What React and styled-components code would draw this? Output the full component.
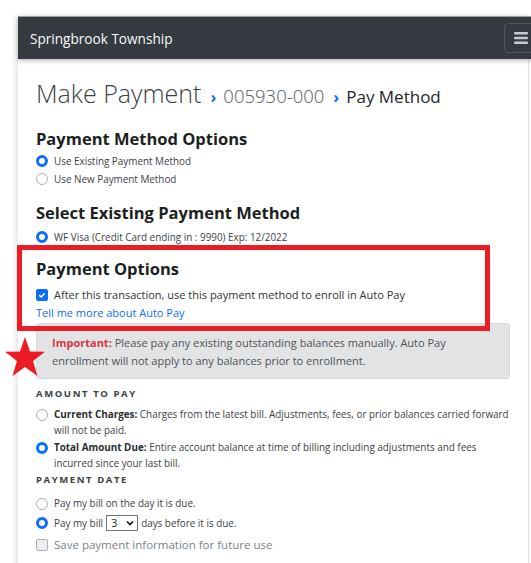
import React from 'react';
import styled, { createGlobalStyle } from 'styled-components';

const GlobalStyle = createGlobalStyle`
  html, body {
    margin: 0;
    padding: 0;
    background: #ffffff;
    font-family: 'Open Sans', 'Noto Sans', sans-serif;
    color: #212529;
  }
`;

const Page = styled.div`
  padding: 16px 0 0 18px;
  height: 547px;
  overflow: hidden;
`;

const Card = styled.div`
  width: 510px;
  min-height: 560px;
  background: #fff;
  border-right: 1px solid #e3e3e3;
  box-shadow: -2px 0 6px rgba(0, 0, 0, 0.12);
`;

const NavBar = styled.div`
  display: flex;
  align-items: center;
  justify-content: space-between;
  height: 42px;
  margin-right: -4px;
  padding-left: 12px;
  background: #343a40;
  border-top: 1px solid #9a9ea3;
  box-shadow: 0 2px 4px rgba(0, 0, 0, 0.25);
`;

const Brand = styled.span`
  color: #f8f9fa;
  font-size: 13.6px;
`;

const Toggler = styled.button`
  display: flex;
  align-items: center;
  justify-content: center;
  width: 34px;
  height: 30px;
  margin-right: -6px;
  padding: 0;
  background: transparent;
  border: 1px solid #50565c;
  border-radius: 4px;
`;

const Body = styled.div`
  padding: 18px 18px 0 18px;
`;

const Title = styled.h1`
  display: flex;
  align-items: baseline;
  margin: 0 0 15px;
  font-weight: 300;
  font-size: 25px;
  line-height: 32px;
  color: #3a3f44;
`;

const Crumb = styled.span`
  font-size: ${(p) => p.size || 18}px;
  font-weight: ${(p) => (p.dark ? 400 : 300)};
  color: ${(p) => (p.dark ? '#212529' : '#555b61')};
`;

const Chevron = styled.span`
  margin: 0 7px 0 9px;
  color: #0d6efd;
  font-size: 16px;
  font-weight: 700;
`;

const Heading = styled.h2`
  margin: ${(p) => p.top || 0}px 0 ${(p) => p.bottom || 2}px;
  font-size: 16.5px;
  line-height: 22px;
  font-weight: 700;
  color: #1c1f22;
`;

const OptionRow = styled.label`
  display: flex;
  align-items: ${(p) => (p.top ? 'flex-start' : 'center')};
  gap: 6px;
  min-height: 18px;
  font-size: ${(p) => p.size || 9.9}px;
  line-height: ${(p) => p.lh || 18}px;
  color: ${(p) => p.color || '#3d4247'};
`;

const Radio = styled.span`
  flex: none;
  box-sizing: border-box;
  width: 12px;
  height: 12px;
  margin-top: ${(p) => (p.offset ? '3px' : 0)};
  border-radius: 50%;
  background: #fff;
  border: ${(p) => (p.on ? '3.5px solid #0d6efd' : '1px solid #a9afb5')};
`;

const Check = styled.span`
  flex: none;
  display: flex;
  align-items: center;
  justify-content: center;
  box-sizing: border-box;
  width: 12px;
  height: 12px;
  border-radius: 2px;
  background: ${(p) => (p.on ? '#0d6efd' : '#eceef0')};
  border: 1px solid ${(p) => (p.on ? '#0d6efd' : '#a9afb5')};
`;

const OptionsSection = styled.div`
  position: relative;
`;

const Highlight = styled.div`
  position: absolute;
  left: -19px;
  top: -13px;
  width: 463px;
  height: 76px;
  border: 5px solid #ed1c24;
  pointer-events: none;
  z-index: 2;
`;

const Link = styled.a`
  display: block;
  font-size: 11px;
  line-height: 16px;
  color: #0d6efd;
  text-decoration: none;
`;

const AlertWrap = styled.div`
  position: relative;
`;

const Alert = styled.div`
  margin-top: 2px;
  padding: 10px 12px 8px 15px;
  background: #e2e3e5;
  border: 1px solid #d6d8db;
  border-radius: 3px;
  font-size: 11px;
  line-height: 18px;
  color: #4f5459;
`;

const Important = styled.strong`
  color: #d9353e;
`;

const Star = styled.svg`
  position: absolute;
  left: -32px;
  top: 13px;
`;

const SubLabel = styled.div`
  margin: ${(p) => p.top || 0}px 0 ${(p) => p.bottom || 5}px;
  font-size: 9.5px;
  line-height: 14px;
  font-weight: 700;
  letter-spacing: 1.6px;
  color: #3b4045;
`;

const Select = styled.span`
  display: inline-flex;
  align-items: center;
  justify-content: space-between;
  box-sizing: border-box;
  width: 32px;
  height: 16px;
  margin: 0 3px;
  padding: 0 3px 0 4px;
  border: 1px solid #6c757d;
  font-size: 10.5px;
  color: #212529;
`;

const Lead = styled.b`
  color: #2b2f33;
`;

const Stack = styled.div`
  display: flex;
  flex-direction: column;
`;

const HamburgerIcon = () => (
  <svg width="16" height="14" viewBox="0 0 16 14">
    <rect x="1" y="1" width="14" height="2.4" rx="1" fill="#c8ccd0" />
    <rect x="1" y="5.8" width="14" height="2.4" rx="1" fill="#c8ccd0" />
    <rect x="1" y="10.6" width="14" height="2.4" rx="1" fill="#c8ccd0" />
  </svg>
);

const TickIcon = () => (
  <svg width="8" height="8" viewBox="0 0 8 8">
    <path d="M1.3 4.2 L3.2 6 L6.7 2.2" fill="none" stroke="#fff" strokeWidth="1.5" />
  </svg>
);

const App = () => (
  <>
    <GlobalStyle />
    <Page>
      <Card>
        <NavBar>
          <Brand>Springbrook Township</Brand>
          <Toggler aria-label="menu">
            <HamburgerIcon />
          </Toggler>
        </NavBar>
        <Body>
          <Title>
            Make Payment
            <Chevron>›</Chevron>
            <Crumb size={18.5}>005930-000</Crumb>
            <Chevron>›</Chevron>
            <Crumb size={17} dark>Pay Method</Crumb>
          </Title>

          <Heading bottom={2}>Payment Method Options</Heading>
          <Stack>
            <OptionRow><Radio on />Use Existing Payment Method</OptionRow>
            <OptionRow><Radio />Use New Payment Method</OptionRow>
          </Stack>

          <Heading top={14} bottom={4}>Select Existing Payment Method</Heading>
          <OptionRow><Radio on />WF Visa (Credit Card ending in : 9990) Exp: 12/2022</OptionRow>

          <OptionsSection>
            <Highlight />
            <Heading top={12} bottom={5}>Payment Options</Heading>
            <OptionRow size={11} lh={20} color="#2f3438">
              <Check on><TickIcon /></Check>
              After this transaction, use this payment method to enroll in Auto Pay
            </OptionRow>
            <Link href="#">Tell me more about Auto Pay</Link>
          </OptionsSection>

          <AlertWrap>
            <Star width="42" height="42" viewBox="0 0 42 42">
              <polygon
                points="21,1 26,15.5 41,15.8 29,25 33.5,40 21,31 8.5,40 13,25 1,15.8 16,15.5"
                fill="#ed1c24"
              />
            </Star>
            <Alert>
              <Important>Important:</Important> Please pay any existing outstanding balances manually. Auto Pay
              enrollment will not apply to any balances prior to enrollment.
            </Alert>
          </AlertWrap>

          <SubLabel top={8} bottom={5}>AMOUNT TO PAY</SubLabel>
          <Stack>
            <OptionRow top lh={16.3}>
              <Radio offset />
              <span><Lead>Current Charges:</Lead> Charges from the latest bill. Adjustments, fees, or prior balances carried forward will not be paid.</span>
            </OptionRow>
            <OptionRow top lh={16.3}>
              <Radio on offset />
              <span><Lead>Total Amount Due:</Lead> Entire account balance at time of billing including adjustments and fees incurred since your last bill.</span>
            </OptionRow>
          </Stack>

          <SubLabel top={2} bottom={7}>PAYMENT DATE</SubLabel>
          <Stack>
            <OptionRow lh={19.5}><Radio />Pay my bill on the day it is due.</OptionRow>
            <OptionRow lh={19.5}>
              <Radio on />
              <span>
                Pay my bill
                <Select>3 <svg width="8" height="6" viewBox="0 0 8 6"><path d="M1 1.5 L4 4.5 L7 1.5" fill="none" stroke="#111" strokeWidth="1.6" /></svg></Select>
                days before it is due.
              </span>
            </OptionRow>
            <OptionRow size={11.5} lh={23} color="#7c8288"><Check />Save payment information for future use</OptionRow>
          </Stack>
        </Body>
      </Card>
    </Page>
  </>
);

export default App;
